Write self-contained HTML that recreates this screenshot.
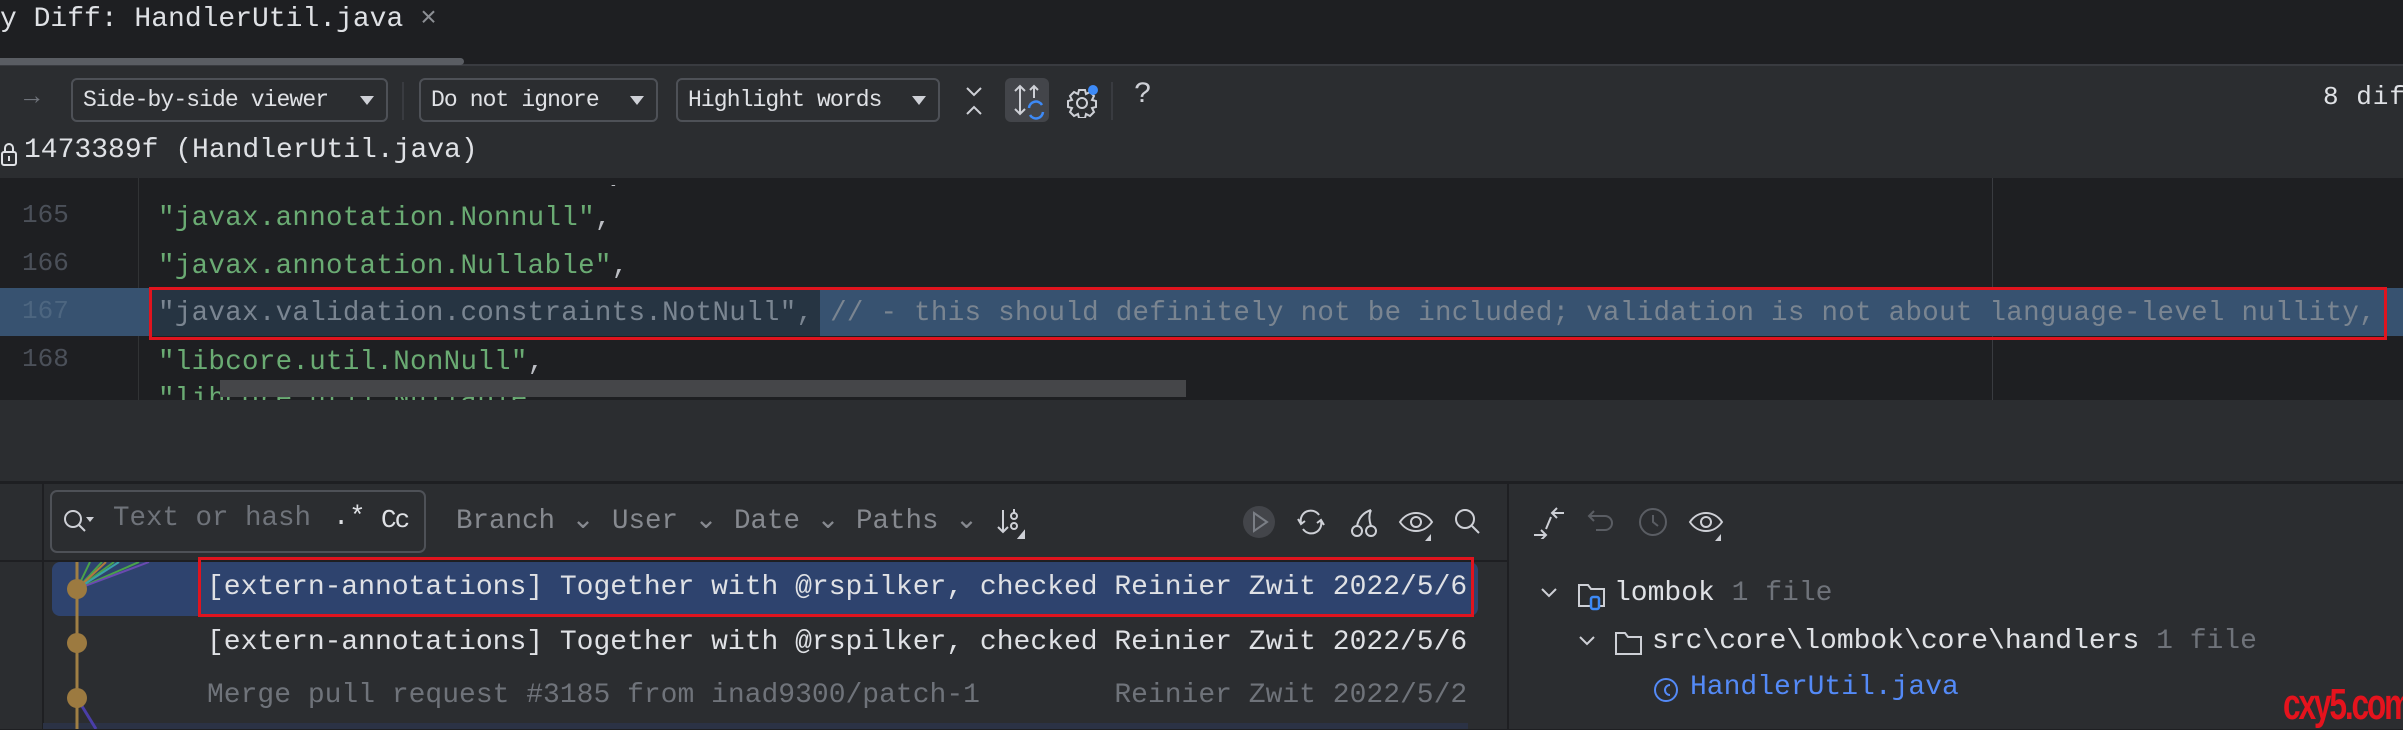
<!DOCTYPE html>
<html><head><meta charset="utf-8"><style>
*{margin:0;padding:0;box-sizing:border-box}
body{width:2403px;height:729px;overflow:hidden;background:#1e1f22;position:relative;font-family:"Liberation Mono",monospace;color:#dfe1e5}
.a{position:absolute;white-space:pre}
.dd{position:absolute;top:78px;height:44px;border:2px solid #4e5157;border-radius:6px;font-size:23px;line-height:40px;padding-left:10px;color:#dfe1e5;letter-spacing:-0.9px}
.dd:after{content:"";position:absolute;right:12px;top:16px;border-left:7px solid transparent;border-right:7px solid transparent;border-top:9px solid #ced0d6}
.code{font-size:27.5px;letter-spacing:0.3px;color:#6aab73;line-height:48px}
.ln{font-size:26px;color:#4b5059;left:22px}
.log{font-size:28px;letter-spacing:0px;color:#dfe1e5}
.fl{font-size:27.5px;color:#86898f;letter-spacing:0px;top:503px}
svg{position:absolute}
</style></head><body>
<div class="a" style="left:0;top:4px;font-size:28px;color:#dfe1e5">y Diff: HandlerUtil.java <span style="color:#8c8f94">×</span></div>
<div class="a" style="left:0;top:64px;width:2403px;height:2px;background:#393b40"></div>
<div class="a" style="left:0;top:58px;width:464px;height:7px;background:#5a5d63;border-radius:0 4px 4px 0"></div>
<div class="a" style="left:0;top:66px;width:2403px;height:112px;background:#2b2d30"></div>
<div class="a" style="left:24px;top:82px;font-size:26px;color:#6f737a">→</div>
<div class="dd" style="left:71px;width:317px">Side-by-side viewer</div>
<div class="a" style="left:402px;top:82px;width:2px;height:38px;background:#393b40"></div>
<div class="dd" style="left:419px;width:239px">Do not ignore</div>
<div class="dd" style="left:676px;width:264px">Highlight words</div>
<svg style="left:962px;top:84px" width="24" height="34" viewBox="0 0 24 34"><path d="M5 4l7 7 7-7M5 30l7-7 7 7" stroke="#ced0d6" stroke-width="2" fill="none"/></svg>
<div class="a" style="left:1005px;top:78px;width:44px;height:44px;background:#43454a;border-radius:6px"></div>
<svg style="left:1008px;top:82px" width="40" height="38" viewBox="0 0 40 38"><path d="M12 4v28M7 9l5-5 5 5M7 27l5 5 5-5M26 4v12M22 8l4-4 4 4" stroke="#ced0d6" stroke-width="2" fill="none"/><path d="M21 26a7 7 0 0 1 13-3M35 30a7 7 0 0 1-13 3" stroke="#3d8af7" stroke-width="2.5" fill="none"/></svg>
<svg style="left:1066px;top:84px" width="34" height="34" viewBox="0 0 34 34"><circle cx="16" cy="19" r="5" stroke="#ced0d6" stroke-width="2" fill="none"/><path d="M13 6h6l1 4 4-2 4 4-2 4 4 1v6l-4 1 2 4-4 4-4-2-1 4h-6l-1-4-4 2-4-4 2-4-4-1v-6l4-1-2-4 4-4 4 2z" stroke="#ced0d6" stroke-width="2" fill="none"/><circle cx="27" cy="6" r="5" fill="#3d8af7"/></svg>
<div class="a" style="left:1111px;top:82px;width:2px;height:38px;background:#393b40"></div>
<div class="a" style="left:1134px;top:78px;font-size:30px;color:#ced0d6">?</div>
<div class="a" style="left:2323px;top:82px;font-size:26px;letter-spacing:1px">8 dif</div>
<svg style="left:0;top:140px" width="20" height="28" viewBox="0 0 20 28"><rect x="2" y="12" width="14" height="13" rx="2" stroke="#dfe1e5" stroke-width="2" fill="none"/><path d="M5 12V8a4 4 0 0 1 8 0v4M9 16v5" stroke="#dfe1e5" stroke-width="2" fill="none"/></svg>
<div class="a" style="left:24px;top:135px;font-size:28px;">1473389f (HandlerUtil.java)</div>
<div class="a" style="left:138px;top:178px;width:1px;height:222px;background:#313335"></div>
<div class="a" style="left:1992px;top:178px;width:1px;height:222px;background:#393b40"></div>
<div class="a" style="left:0;top:288px;width:2403px;height:48px;background:#375270"></div>
<div class="a" style="left:150px;top:288px;width:670px;height:48px;background:#263442"></div>
<div class="a" style="left:606px;top:178px;font-size:27.5px;color:#bcbec4;line-height:10px;height:8px;overflow:hidden">,</div>
<div class="a ln" style="top:200px">165</div>
<div class="a code" style="left:158px;top:195px">"javax.annotation.Nonnull"<span style="color:#bcbec4">,</span></div>
<div class="a ln" style="top:248px">166</div>
<div class="a code" style="left:158px;top:243px">"javax.annotation.Nullable"<span style="color:#bcbec4">,</span></div>
<div class="a ln" style="top:296px;color:#4d6680">167</div>
<div class="a code" style="left:158px;top:290px;color:#7a8591">"javax.validation.constraints.NotNull", // - this should definitely not be included; validation is not about language-level nullity,</div>
<div class="a ln" style="top:344px">168</div>
<div class="a code" style="left:158px;top:339px">"libcore.util.NonNull"<span style="color:#bcbec4">,</span></div>
<div class="a" style="left:149px;top:287px;width:2238px;height:53px;border:3px solid #e0141e"></div>
<div class="a code" style="left:158px;top:385px;color:#6aab73;height:15px;overflow:hidden;line-height:30px">"libcore.util.Nullable",</div>
<div class="a" style="left:220px;top:380px;width:966px;height:17px;background:#454649"></div>
<div class="a" style="left:0;top:400px;width:2403px;height:329px;background:#2b2d30"></div>
<div class="a" style="left:0;top:481px;width:2403px;height:3px;background:#1e1f22"></div>
<div class="a" style="left:42px;top:484px;width:2px;height:245px;background:#1e1f22"></div>
<div class="a" style="left:0;top:560px;width:1507px;height:2px;background:#1e1f22"></div>
<div class="a" style="left:1507px;top:484px;width:2px;height:245px;background:#1e1f22"></div>
<div class="a" style="left:50px;top:490px;width:376px;height:63px;border:2px solid #4e5157;border-radius:7px"></div>
<svg style="left:62px;top:508px" width="36" height="30" viewBox="0 0 36 30"><circle cx="11" cy="11" r="8" stroke="#ced0d6" stroke-width="2" fill="none"/><path d="M17 17l6 6" stroke="#ced0d6" stroke-width="2"/><path d="M24 9h8l-4 5z" fill="#ced0d6"/></svg>
<div class="a" style="left:113px;top:503px;font-size:27.5px;color:#6f737a;width:200px;overflow:hidden">Text or hash</div>
<div class="a" style="left:333px;top:503px;font-size:27px;color:#dfe1e5">.*</div>
<div class="a" style="left:381px;top:505px;font-size:26px;color:#dfe1e5;letter-spacing:-2px">Cc</div>
<div class="a fl" style="left:456px">Branch ⌄</div>
<div class="a fl" style="left:612px">User ⌄</div>
<div class="a fl" style="left:734px">Date ⌄</div>
<div class="a fl" style="left:856px">Paths ⌄</div>
<svg style="left:996px;top:506px" width="34" height="34" viewBox="0 0 34 34"><path d="M7 4v22M2 21l5 5 5-5" stroke="#ced0d6" stroke-width="2" fill="none"/><circle cx="18" cy="10" r="3" stroke="#ced0d6" stroke-width="2" fill="none"/><circle cx="18" cy="20" r="3" stroke="#ced0d6" stroke-width="2" fill="none"/><path d="M18 3v4M28 26v6h-5z" stroke="#ced0d6" stroke-width="2" fill="#ced0d6"/></svg>
<div class="a" style="left:1243px;top:506px;width:32px;height:32px;border-radius:16px;background:#43454a"></div>
<svg style="left:1249px;top:510px" width="22" height="24" viewBox="0 0 22 24"><path d="M5 3l13 9-13 9z" stroke="#7a7e85" stroke-width="2" fill="none"/></svg>
<svg style="left:1295px;top:507px" width="32" height="30" viewBox="0 0 32 30"><path d="M6 16a10 10 0 0 1 18-8M26 14a10 10 0 0 1-18 8M3 12l3 5 4-3M29 18l-3-5-4 3" stroke="#ced0d6" stroke-width="2" fill="none"/></svg>
<svg style="left:1348px;top:506px" width="32" height="34" viewBox="0 0 32 34"><circle cx="9" cy="25" r="5" stroke="#ced0d6" stroke-width="2" fill="none"/><circle cx="23" cy="25" r="5" stroke="#ced0d6" stroke-width="2" fill="none"/><path d="M9 20c2-10 8-14 14-16M23 20c-2-6-2-12 0-16" stroke="#ced0d6" stroke-width="2" fill="none"/></svg>
<svg style="left:1398px;top:508px" width="36" height="34" viewBox="0 0 36 34"><path d="M2 14c8-12 24-12 32 0-8 12-24 12-32 0z" stroke="#ced0d6" stroke-width="2" fill="none"/><circle cx="18" cy="14" r="5" stroke="#ced0d6" stroke-width="2" fill="none"/><path d="M33 26v7h-6z" fill="#ced0d6"/></svg>
<svg style="left:1453px;top:507px" width="30" height="32" viewBox="0 0 30 32"><circle cx="12" cy="12" r="9" stroke="#ced0d6" stroke-width="2" fill="none"/><path d="M19 19l7 7" stroke="#ced0d6" stroke-width="2"/></svg>
<svg style="left:1532px;top:507px" width="34" height="32" viewBox="0 0 34 32"><path d="M2 28h12M9 23l5 5-5 5M20 6h12M25 1l-5 5 5 5M14 22l5-12" stroke="#ced0d6" stroke-width="2" fill="none"/></svg>
<svg style="left:1586px;top:508px" width="32" height="30" viewBox="0 0 32 30"><path d="M8 3L3 8l5 5M3 8h16a7 7 0 0 1 0 14h-9" stroke="#5a5d63" stroke-width="2" fill="none"/></svg>
<svg style="left:1638px;top:507px" width="30" height="32" viewBox="0 0 30 32"><circle cx="15" cy="15" r="13" stroke="#5a5d63" stroke-width="2" fill="none"/><path d="M15 8v7l5 4" stroke="#5a5d63" stroke-width="2" fill="none"/></svg>
<svg style="left:1688px;top:508px" width="36" height="34" viewBox="0 0 36 34"><path d="M2 14c8-12 24-12 32 0-8 12-24 12-32 0z" stroke="#ced0d6" stroke-width="2" fill="none"/><circle cx="18" cy="14" r="5" stroke="#ced0d6" stroke-width="2" fill="none"/><path d="M33 26v7h-6z" fill="#ced0d6"/></svg>
<div class="a" style="left:52px;top:562px;width:1426px;height:54px;background:#2e436e;border-radius:8px"></div>
<div class="a" style="left:43px;top:723px;width:1425px;height:6px;background:#2b3245"></div>
<svg style="left:44px;top:562px" width="120" height="167" viewBox="0 0 120 167"><path d="M33 27L46 0M33 27L58 0M33 27L70 0M33 27L95 0" stroke-width="2" fill="none" stroke="#4aa24a"/><path d="M33 27L62 0" stroke="#b07a3e" stroke-width="2"/><path d="M33 27L75 0" stroke="#3aa0a8" stroke-width="2"/><path d="M33 27L105 0" stroke="#6a4ab0" stroke-width="2"/><path d="M33 0v167" stroke="#a07f44" stroke-width="3"/><path d="M33 136L52 167" stroke="#4a3ea8" stroke-width="3"/><circle cx="33" cy="27" r="10" fill="#9c7a40"/><circle cx="33" cy="81" r="10" fill="#9c7a40"/><circle cx="33" cy="136" r="10" fill="#9c7a40"/></svg>
<div class="a log" style="left:207px;top:572px">[extern-annotations] Together with @rspilker, checked Reinier Zwit 2022/5/6</div>
<div class="a log" style="left:207px;top:627px">[extern-annotations] Together with @rspilker, checked Reinier Zwit 2022/5/6</div>
<div class="a log" style="left:207px;top:680px;color:#6f737a">Merge pull request #3185 from inad9300/patch-1        Reinier Zwit 2022/5/2</div>
<div class="a" style="left:198px;top:557px;width:1276px;height:60px;border:3px solid #e0141e"></div>
<svg style="left:1540px;top:586px" width="18" height="14" viewBox="0 0 18 14"><path d="M2 3l7 7 7-7" stroke="#ced0d6" stroke-width="2" fill="none"/></svg>
<svg style="left:1577px;top:581px" width="30" height="30" viewBox="0 0 30 30"><path d="M2 4h9l3 4h13v17H2z" stroke="#ced0d6" stroke-width="2" fill="none"/><rect x="14" y="16" width="8" height="12" rx="2" stroke="#3d8af7" stroke-width="2.5" fill="#2b2d30"/></svg>
<div class="a" style="left:1614px;top:578px;font-size:28px;">lombok <span style="color:#6f737a">1 file</span></div>
<svg style="left:1578px;top:634px" width="18" height="14" viewBox="0 0 18 14"><path d="M2 3l7 7 7-7" stroke="#ced0d6" stroke-width="2" fill="none"/></svg>
<svg style="left:1614px;top:629px" width="30" height="30" viewBox="0 0 30 30"><path d="M2 4h9l3 4h13v17H2z" stroke="#ced0d6" stroke-width="2" fill="none"/></svg>
<div class="a" style="left:1652px;top:626px;font-size:28px;">src\core\lombok\core\handlers <span style="color:#6f737a">1 file</span></div>
<svg style="left:1653px;top:675px" width="28" height="30" viewBox="0 0 28 30"><circle cx="13" cy="15" r="11" stroke="#548af7" stroke-width="2" fill="none"/><path d="M17 10a5 5 0 1 0 0 10" stroke="#548af7" stroke-width="2" fill="none"/></svg>
<div class="a" style="left:1690px;top:672px;font-size:28px;color:#548af7">HandlerUtil.java</div>
<div class="a" style="left:2283px;top:680px;font-family:'Liberation Sans',sans-serif;font-weight:bold;font-size:44px;color:#e5131d;letter-spacing:-3px;transform:scaleX(0.72);transform-origin:left">cxy5.com</div>
</body></html>
